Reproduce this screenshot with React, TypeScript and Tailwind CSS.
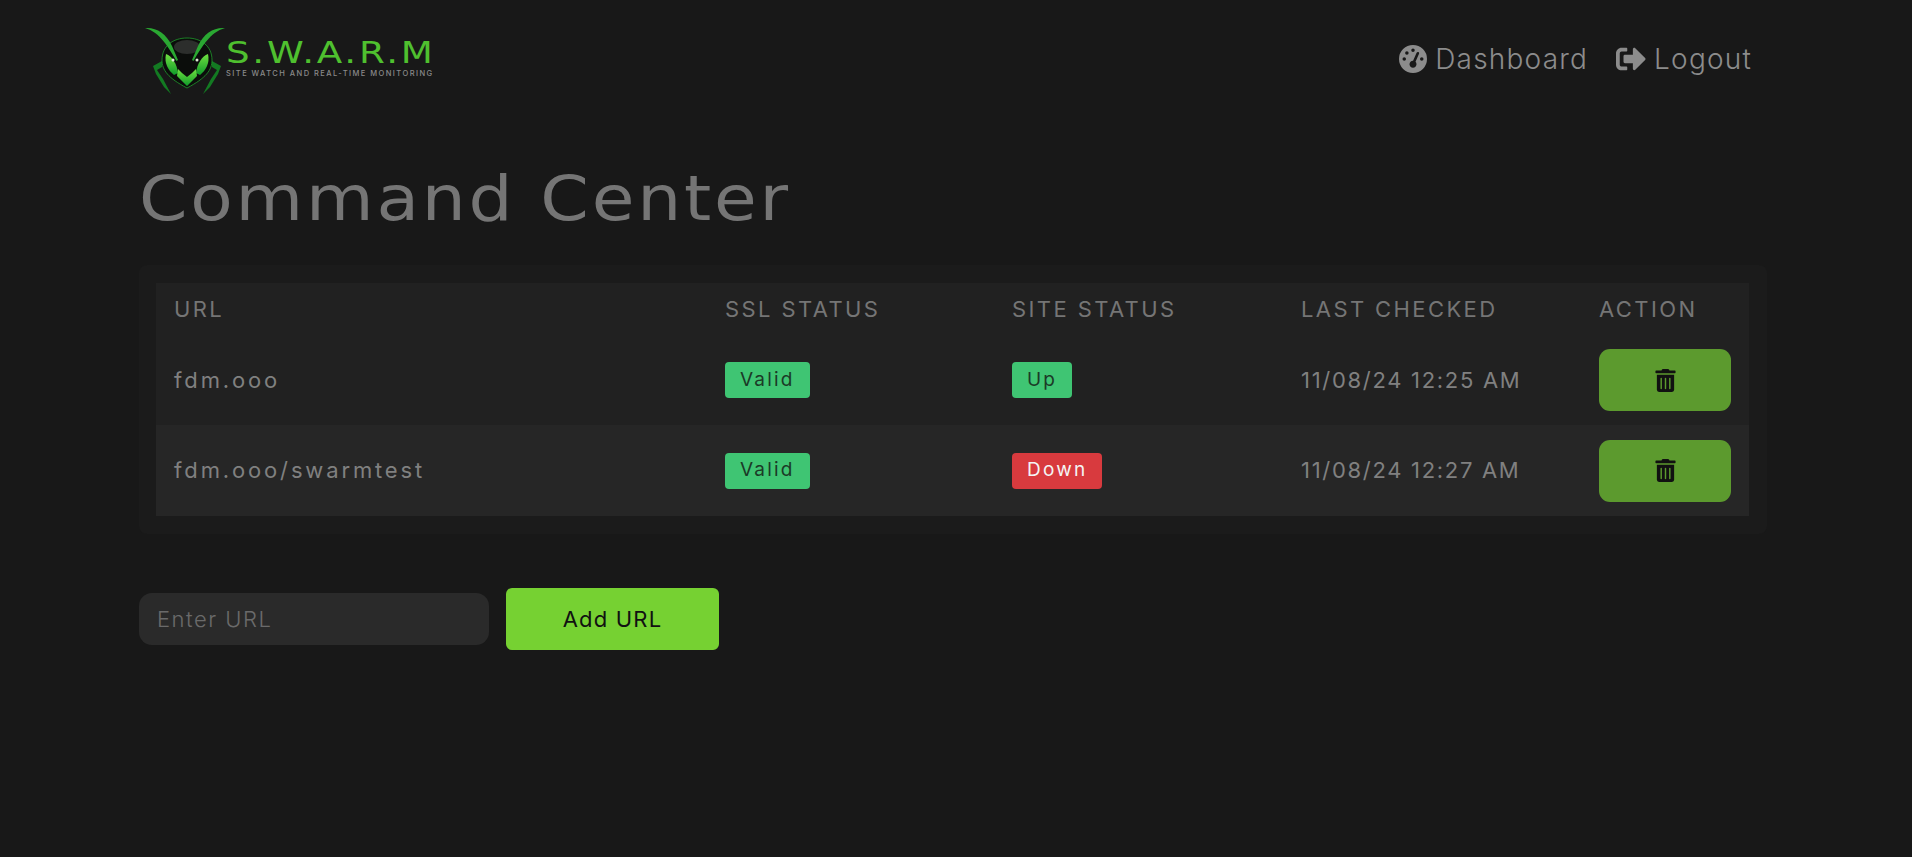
import { FaSignOutAlt, FaTrashAlt } from "react-icons/fa";
import { FaGaugeHigh } from "react-icons/fa6";

const sites = [
  { url: "fdm.ooo", ssl: "Valid", status: "Up", checked: "11/08/24 12:25 AM" },
  { url: "fdm.ooo/swarmtest", ssl: "Valid", status: "Down", checked: "11/08/24 12:27 AM" },
];

// ant head mark from the logo
function Logo() {
  return (
    <svg width="86" height="85" viewBox="0 0 86 85" className="shrink-0">
      <defs>
        <linearGradient id="headGreen" x1="0" y1="0" x2="0" y2="1">
          <stop offset="0" stopColor="#6fe040" />
          <stop offset="1" stopColor="#0f9a2a" />
        </linearGradient>
      </defs>
      {/* legs */}
      <path d="M13 49L22 44L22 50L17 53L23 62L31 77L24 70L16 57Z" fill="#137a22" />
      <path d="M81 49L72 44L72 50L77 53L71 62L63 77L70 70L78 57Z" fill="#137a22" />
      {/* head */}
      <path d="M22 43C22 29 33 21 47 21C61 21 72 29 72 43C72 53 66 61 47 71C28 61 22 53 22 43Z" fill="#0b0d0b" stroke="#1f9a2c" strokeWidth="0.8" />
      <ellipse cx="47" cy="30" rx="13" ry="7" fill="#2c2e2c" />
      {/* eyes */}
      <path d="M26 37C32 39 37 47 38 56L34 58C28 53 24 46 26 37Z" fill="url(#headGreen)" />
      <path d="M68 37C62 39 57 47 56 56L60 58C66 53 70 46 68 37Z" fill="url(#headGreen)" />
      {/* jaw */}
      <path d="M38 52L42 56L47 60L52 56L56 52L57 59L47 69L37 59Z" fill="url(#headGreen)" />
      {/* antennae */}
      <path d="M5 11C16 10 26 16 32 29L38 43L36.5 44C29 31 20 15 5 11Z" fill="#2aa832" />
      <path d="M85 11C74 10 64 16 58 29L52 43L53.5 44C61 31 70 15 85 11Z" fill="#2aa832" />
      <circle cx="33" cy="43" r="1.5" fill="#dfe8d8" />
      <circle cx="57" cy="43" r="1.5" fill="#dfe8d8" />
    </svg>
  );
}

function Badge({ label }: { label: string }) {
  const color = label === "Down" ? "bg-[#d83a3e] text-[#f4f4f4]" : "bg-[#3fc573] text-[#1b3a27]";
  return (
    <span className={`inline-flex h-[36px] items-center rounded-[4px] px-[15px] text-[19px] tracking-[2.2px] ${color}`}>
      {label}
    </span>
  );
}

export default function App() {
  return (
    <div className="min-h-[857px] bg-[#181818] font-['Inter',sans-serif] text-[#808080]">
      <div className="ml-[139px] w-[1628px]">
        <header className="flex h-[118px] items-center justify-between">
          <div className="ml-[1px] flex items-center">
            <Logo />
            <div className="-mt-[6px]">
              <div className="origin-left scale-x-[1.2] font-['DejaVu_Sans',sans-serif] text-[31px] leading-[34px] tracking-[2.3px] text-[#4fc02f]">
                S.W.A.R.M
              </div>
              <div className="text-[7.5px] leading-[9px] font-medium tracking-[1.45px] whitespace-nowrap text-[#8a8a8a]">
                SITE WATCH AND REAL-TIME MONITORING
              </div>
            </div>
          </div>
          <nav className="mr-[15px] flex items-center gap-[28px] text-[28px] font-light tracking-[1.2px] text-[#8c8c8c]">
            <a className="flex items-center gap-[8px]">
              <FaGaugeHigh className="size-[28px]" />
              Dashboard
            </a>
            <a className="flex items-center gap-[8px]">
              <FaSignOutAlt className="size-[30px]" />
              Logout
            </a>
          </nav>
        </header>

        <h1 className="mt-[41px] h-[80px] origin-left scale-x-[1.12] font-['DejaVu_Sans',sans-serif] text-[62px] leading-[80px] tracking-[2.5px] text-[#757575]">
          Command Center
        </h1>

        <section className="mt-[26px] rounded-lg bg-[#1b1b1b] px-[17px] py-[18px]">
          <table className="w-[1593px] table-fixed border-collapse bg-[#212121] text-left">
            <colgroup>
              <col className="w-[551px]" />
              <col className="w-[287px]" />
              <col className="w-[289px]" />
              <col className="w-[298px]" />
              <col className="w-[168px]" />
            </colgroup>
            <thead>
              <tr className="h-[52px] text-[22px] tracking-[2.4px] text-[#757575]">
                <th className="px-[18px] font-normal">URL</th>
                <th className="px-[18px] font-normal">SSL STATUS</th>
                <th className="px-[18px] font-normal">SITE STATUS</th>
                <th className="px-[18px] font-normal">LAST CHECKED</th>
                <th className="px-[18px] font-normal">ACTION</th>
              </tr>
            </thead>
            <tbody>
              {sites.map((site, i) => (
                <tr key={site.url} className={i === 1 ? "h-[91px] bg-[#262626]" : "h-[90px]"}>
                  <td className="px-[18px] text-[22px] tracking-[2.85px]">{site.url}</td>
                  <td className="px-[18px]"><Badge label={site.ssl} /></td>
                  <td className="px-[18px]"><Badge label={site.status} /></td>
                  <td className="px-[18px] text-[22px] tracking-[1.7px] whitespace-nowrap">{site.checked}</td>
                  <td className="px-[18px]">
                    <button className="flex h-[62px] w-[132px] items-center justify-center rounded-[11px] bg-[#5c9a2e] text-[#111]">
                      <FaTrashAlt className="size-[23px]" />
                    </button>
                  </td>
                </tr>
              ))}
            </tbody>
          </table>
        </section>

        <div className="mt-[54px] flex items-center gap-[17px]">
          <input
            placeholder="Enter URL"
            className="h-[52px] w-[350px] rounded-[13px] bg-[#2a2a2a] px-[18px] text-[22px] font-light tracking-[1.5px] outline-none placeholder:text-[#6a6a6a]"
          />
          <button className="h-[62px] w-[213px] rounded-[6px] bg-[#76d132] text-[22px] font-normal tracking-[1.2px] text-[#111]">
            Add URL
          </button>
        </div>
      </div>
    </div>
  );
}
